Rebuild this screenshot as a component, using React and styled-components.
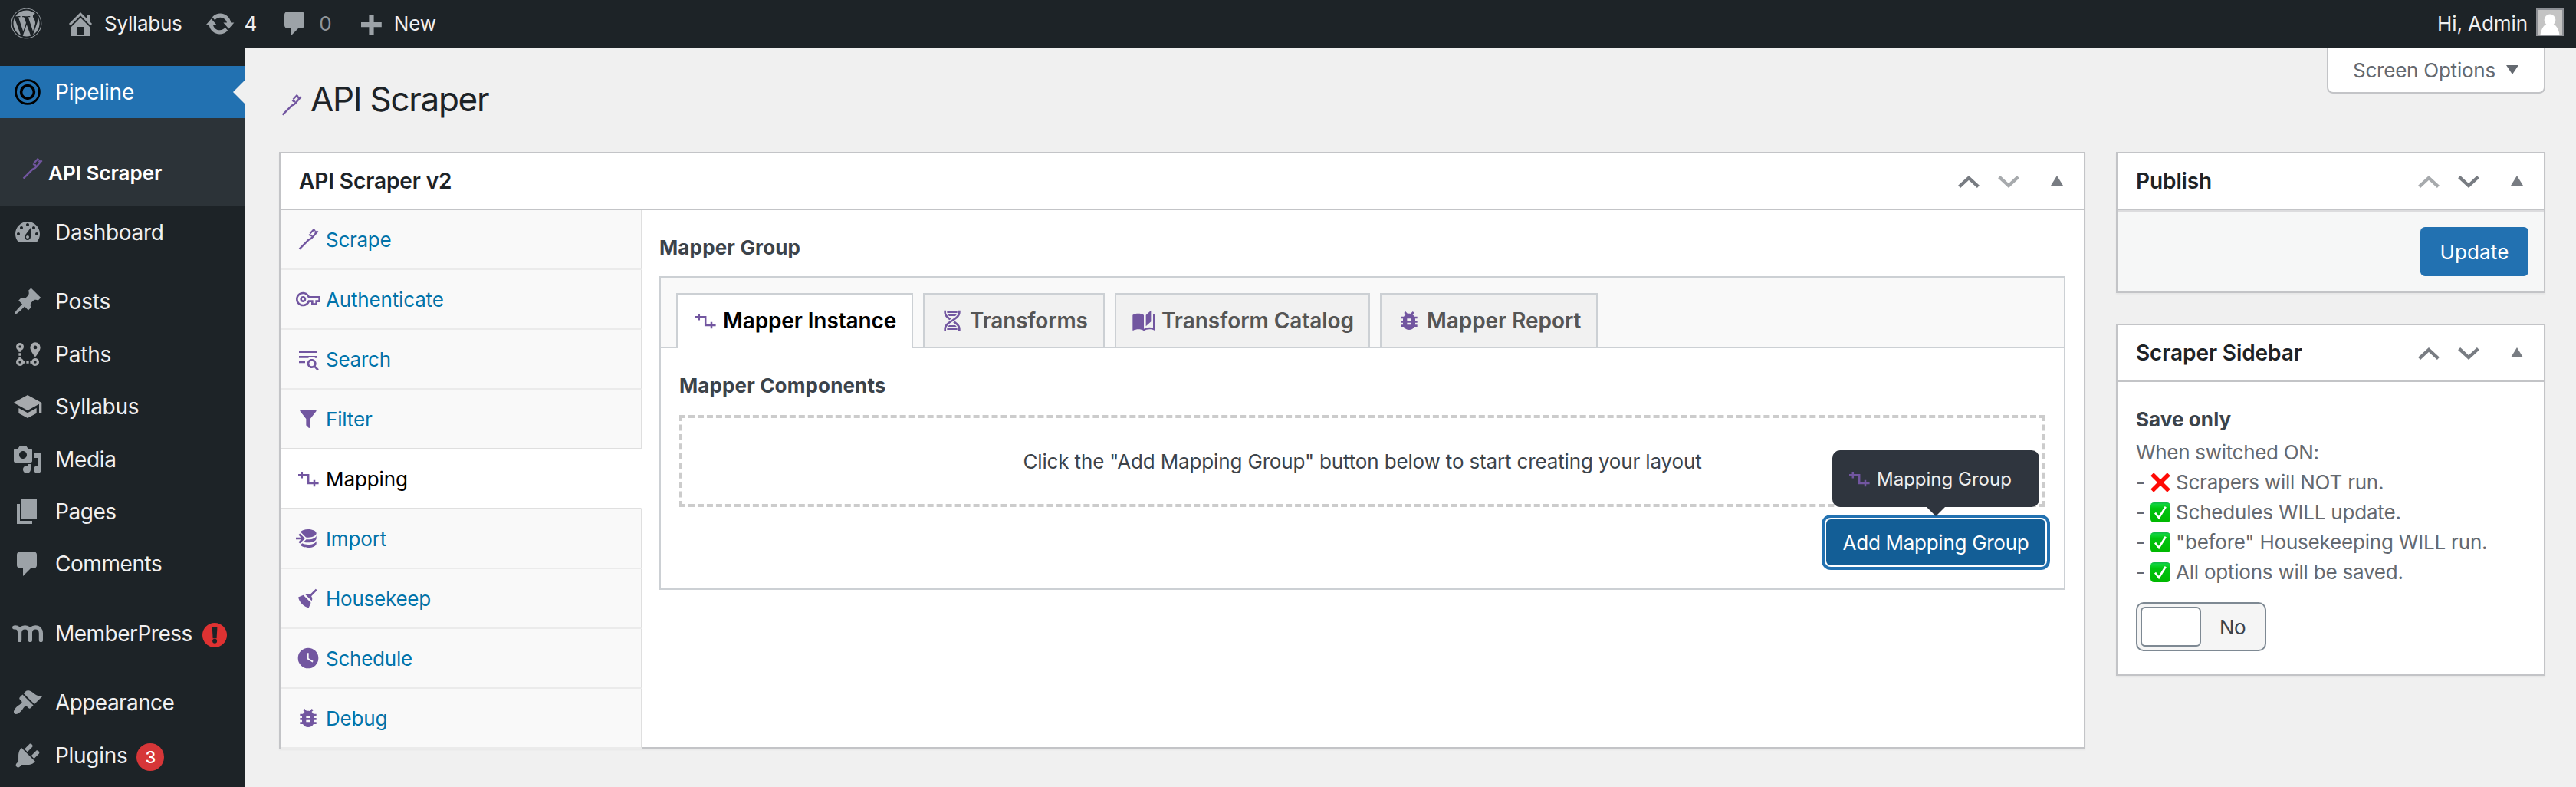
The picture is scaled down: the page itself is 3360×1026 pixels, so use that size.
import React from "react";
import styled, { createGlobalStyle, css } from "styled-components";
import { FaWordpress } from "react-icons/fa";

const GlobalStyle = createGlobalStyle`
  * { box-sizing: border-box; }
  body {
    margin: 0;
    background: #f0f0f0;
    font-family: Inter, "Liberation Sans", sans-serif;
    font-size: 26px;
    color: #3c434a;
    overflow: hidden;
  }
  svg { display: block; flex: none; }
`;

const PURPLE = "#7256a0";

/* ---------- icons ---------- */

const GLYPHS20 = {
  home: "M16 8.5l1.53 1.53-1.06 1.06L10 4.6l-6.47 6.49-1.06-1.06L10 2.5l4 4v-2h2v4zm-6-2.46l6 5.99V18H4v-5.97zM12 17v-5H8v5h4z",
  update: "M10.2 3.28c3.53 0 6.43 2.61 6.92 6h2.08l-3.5 4-3.5-4h2.32c-.45-1.97-2.21-3.45-4.32-3.45-1.45 0-2.73.71-3.54 1.78L4.95 5.66C6.23 4.2 8.11 3.28 10.2 3.28zm-.4 13.44c-3.52 0-6.43-2.61-6.92-6H.8l3.5-4c1.17 1.33 2.33 2.67 3.5 4H5.48c.45 1.97 2.21 3.45 4.32 3.45 1.45 0 2.73-.71 3.54-1.78l1.71 1.95c-1.28 1.46-3.15 2.38-5.25 2.38z",
  comments: "M5 2h9c1.1 0 2 .9 2 2v7c0 1.1-.9 2-2 2h-2l-5 5v-5H5c-1.1 0-2-.9-2-2V4c0-1.1.9-2 2-2z",
  plus: "M17.4 9v3.1h-5.1v5.2H9.2v-5.2H4V9h5.2V4.2h3.1V9z",
  dashboard: "M3.76 16h12.48c1.1-1.37 1.76-3.11 1.76-5 0-4.42-3.58-8-8-8s-8 3.58-8 8c0 1.89.66 3.63 1.76 5zM10 4c.55 0 1 .45 1 1s-.45 1-1 1-1-.45-1-1 .45-1 1-1zM6 6c.55 0 1 .45 1 1s-.45 1-1 1-1-.45-1-1 .45-1 1-1zm8 0c.55 0 1 .45 1 1s-.45 1-1 1-1-.45-1-1 .45-1 1-1zm-5.37 5.55L12 7v6c0 1.1-.9 2-2 2s-2-.9-2-2c0-.57.24-1.08.63-1.45zM4 10c.55 0 1 .45 1 1s-.45 1-1 1-1-.45-1-1 .45-1 1-1zm12 0c.55 0 1 .45 1 1s-.45 1-1 1-1-.45-1-1 .45-1 1-1zm-5 3c0-.55-.45-1-1-1s-1 .45-1 1 .45 1 1 1 1-.45 1-1z",
  posts: "M10.44 3.02l1.82-1.82 6.36 6.35-1.83 1.82c-1.05-.68-2.48-.57-3.41.36l-.75.75c-.92.93-1.04 2.35-.35 3.41l-1.83 1.82-2.41-2.41-2.8 2.79c-.42.42-3.38 2.71-3.8 2.29s1.86-3.39 2.28-3.81l2.79-2.79L4.1 9.36l1.83-1.82c1.05.69 2.48.57 3.4-.36l.75-.75c.93-.92 1.05-2.35.36-3.41z",
  media: "M13 11V4c0-.55-.45-1-1-1h-1.67L9 1H5L3.67 3H2c-.55 0-1 .45-1 1v7c0 .55.45 1 1 1h10c.55 0 1-.45 1-1zM7 4.5c1.38 0 2.5 1.12 2.5 2.5S8.38 9.5 7 9.5 4.5 8.38 4.5 7 5.62 4.5 7 4.5zM14 6h5v10.5c0 1.38-1.12 2.5-2.5 2.5S14 17.88 14 16.5s1.12-2.5 2.5-2.5c.17 0 .34.02.5.05V9h-3V6zm-4 8.05V13h2v3.5c0 1.38-1.12 2.5-2.5 2.5S7 17.88 7 16.5 8.12 14 9.5 14c.17 0 .34.02.5.05z",
  pages: "M6 15V2h10v13H6zm-1 1h8v2H3V5h2v11z",
  appearance: "M14.48 11.06L7.41 3.99l1.5-1.5c.5-.56 2.3-.47 3.51.32 1.21.8 1.43 1.28 2.91 2.1 1.18.64 2.45 1.26 4.45.85zm-.71.71L6.7 4.7 4.93 6.47c-.39.39-.39 1.02 0 1.41l1.06 1.06c.39.39.39 1.03 0 1.42-.6.6-1.43 1.11-2.21 1.69-.35.26-.7.53-1.01.84C1.43 14.23.4 16.08 1.4 17.07c.99 1 2.84-.03 4.18-1.36.31-.31.58-.66.85-1.02.57-.78 1.08-1.61 1.69-2.21.39-.39 1.02-.39 1.41 0l1.06 1.06c.39.39 1.02.39 1.41 0z",
  plugins: "M13.11 4.36L9.87 7.6 8 5.73l3.24-3.24c.35-.34 1.05-.2 1.56.32.52.51.66 1.21.31 1.55zm-8 1.77l.91-1.12 9.01 9.01-1.19.84c-.71.71-2.63 1.16-3.82 1.16H6.14L4.9 17.26c-.59.59-1.54.59-2.12 0-.59-.58-.59-1.53 0-2.12l1.24-1.24v-3.88c0-1.13.4-3.19 1.09-3.89zm7.26 3.97l3.24-3.24c.34-.35 1.04-.21 1.55.31.52.51.66 1.21.31 1.55l-3.24 3.25z",
};

const GLYPHS24 = {
  paths: "M18,15A3,3 0 0,1 21,18A3,3 0 0,1 18,21C16.69,21 15.58,20.17 15.17,19H14V17H15.17C15.58,15.83 16.69,15 18,15M18,17A1,1 0 0,0 17,18A1,1 0 0,0 18,19A1,1 0 0,0 19,18A1,1 0 0,0 18,17M18,8A1.43,1.43 0 0,0 19.43,6.57C19.43,5.78 18.79,5.14 18,5.14C17.21,5.14 16.57,5.78 16.57,6.57A1.43,1.43 0 0,0 18,8M18,2.57A4,4 0 0,1 22,6.57C22,9.56 18,14 18,14C18,14 14,9.56 14,6.57A4,4 0 0,1 18,2.57M8.83,17H10V19H8.83C8.42,20.17 7.31,21 6,21A3,3 0 0,1 3,18C3,16.69 3.83,15.58 5,15.17V14H7V15.17C7.85,15.47 8.53,16.15 8.83,17M6,17A1,1 0 0,0 5,18A1,1 0 0,0 6,19A1,1 0 0,0 7,18A1,1 0 0,0 6,17M6,3A3,3 0 0,1 9,6C9,7.31 8.17,8.42 7,8.83V10H5V8.83C3.83,8.42 3,7.31 3,6A3,3 0 0,1 6,3M6,5A1,1 0 0,0 5,6A1,1 0 0,0 6,7A1,1 0 0,0 7,6A1,1 0 0,0 6,5M11,19V17H13V19H11M7,13H5V11H7V13Z",
  school: "M12,3L1,9L12,15L21,10.09V17H23V9M5,13.18V17.18L12,21L19,17.18V13.18L12,17L5,13.18Z",
  key: "M21 18H15V15H13.3C12.2 17.4 9.7 19 7 19C3.1 19 0 15.9 0 12S3.1 5 7 5C9.7 5 12.2 6.6 13.3 9H24V15H21V18M17 16H19V13H22V11H11.9L11.7 10.3C11 8.3 9.1 7 7 7C4.2 7 2 9.2 2 12S4.2 17 7 17C9.1 17 11 15.7 11.7 13.7L11.9 13H17V16M7 15C5.3 15 4 13.7 4 12S5.3 9 7 9 10 10.3 10 12 8.7 15 7 15M7 11C6.4 11 6 11.4 6 12S6.4 13 7 13 8 12.6 8 12 7.6 11 7 11Z",
  search: "M19.31 18.9L22.39 22L21 23.39L17.88 20.32C17.19 20.75 16.37 21 15.5 21C13 21 11 19 11 16.5C11 14 13 12 15.5 12C18 12 20 14 20 16.5C20 17.38 19.75 18.21 19.31 18.9M15.5 19C16.88 19 18 17.88 18 16.5C18 15.12 16.88 14 15.5 14C14.12 14 13 15.12 13 16.5C13 17.88 14.12 19 15.5 19M21 4V6H3V4H21M3 16V14H9V16H3M3 11V9H21V11H18.97C17.96 10.37 16.77 10 15.5 10C14.23 10 13.04 10.37 12.03 11H3Z",
  filter: "M14,12V19.88C14.04,20.18 13.94,20.5 13.71,20.71C13.32,21.1 12.69,21.1 12.3,20.71L10.29,18.7C10.06,18.47 9.96,18.16 10,17.87V12H9.97L4.21,4.62C3.87,4.19 3.95,3.56 4.38,3.22C4.57,3.08 4.78,3 5,3V3H19V3C19.22,3 19.43,3.08 19.62,3.22C20.05,3.56 20.13,4.19 19.79,4.62L14.03,12H14Z",
  import: "M12,3C8.59,3 5.69,4.07 4.54,5.57L9.79,10.82C10.5,10.93 11.22,11 12,11C16.42,11 20,9.21 20,7C20,4.79 16.42,3 12,3M3.92,7.08L2.5,8.5L5,11H0V13H5L2.5,15.5L3.92,16.92L8.84,12M20,9C20,11.21 16.42,13 12,13C11.34,13 10.7,12.95 10.09,12.87L7.62,15.34C8.88,15.75 10.38,16 12,16C16.42,16 20,14.21 20,12M20,14C20,16.21 16.42,18 12,18C9.72,18 7.67,17.5 6.21,16.75L4.53,18.43C5.68,19.93 8.59,21 12,21C16.42,21 20,19.21 20,17",
  broom: "M19.36,2.72L20.78,4.14L15.06,9.85C16.13,11.39 16.28,13.24 15.38,14.44L9.06,8.12C10.26,7.22 12.11,7.37 13.65,8.44L19.36,2.72M5.93,17.57C3.92,15.56 2.69,13.16 2.35,10.92L7.23,8.83L14.67,16.27L12.58,21.15C10.34,20.81 7.94,19.58 5.93,17.57Z",
  clock: "M12,2A10,10 0 0,0 2,12A10,10 0 0,0 12,22A10,10 0 0,0 22,12A10,10 0 0,0 12,2M16.2,16.2L11,13V7H12.5V12.2L17,14.9L16.2,16.2Z",
  bug: "M14,12H10V10H14M14,16H10V14H14M20,8H17.19C16.74,7.22 16.12,6.55 15.37,6.04L17,4.41L15.59,3L13.42,5.17C12.96,5.06 12.5,5 12,5C11.5,5 11.05,5.06 10.59,5.17L8.41,3L7,4.41L8.62,6.04C7.88,6.55 7.26,7.22 6.81,8H4V10H6.09C6.04,10.33 6,10.66 6,11V12H4V14H6V15C6,15.34 6.04,15.67 6.09,16H4V18H6.81C7.85,19.79 9.78,21 12,21C14.22,21 16.15,19.79 17.19,18H20V16H17.91C17.96,15.67 18,15.34 18,15V14H20V12H18V11C18,10.66 17.96,10.33 17.91,10H20V8Z",
  book: "M19,2L14,6.5V17.5L19,13V2M6.5,5C4.55,5 2.45,5.4 1,6.5V21.16C1,21.41 1.25,21.66 1.5,21.66C1.6,21.66 1.65,21.59 1.75,21.59C3.1,20.94 5.05,20.5 6.5,20.5C8.45,20.5 10.55,20.9 12,22C13.35,21.15 15.8,20.5 17.5,20.5C19.15,20.5 20.85,20.81 22.25,21.56C22.35,21.61 22.4,21.59 22.5,21.59C22.75,21.59 23,21.34 23,21.09V6.5C22.4,6.05 21.75,5.75 21,5.5V19C19.9,18.65 18.7,18.5 17.5,18.5C15.8,18.5 13.35,19.15 12,20V6.5C10.55,5.4 8.45,5 6.5,5Z",
  dna: "M4,2H6V4C6,5.44 6.68,6.61 7.88,7.78C8.74,8.61 9.89,9.41 11.09,10.2L9.26,11.39C8.27,10.72 7.31,10 6.5,9.21C5.07,7.82 4,6.1 4,4V2M18,2H20V4C20,6.1 18.93,7.82 17.5,9.21C16.09,10.58 14.29,11.73 12.54,12.84C10.79,13.96 9.09,15.05 7.88,16.22C6.68,17.39 6,18.56 6,20V22H4V20C4,17.9 5.07,16.18 6.5,14.79C7.91,13.42 9.71,12.27 11.46,11.16C13.21,10.04 14.91,8.95 16.12,7.78C17.32,6.61 18,5.44 18,4V2M14.74,12.61C15.73,13.28 16.69,14 17.5,14.79C18.93,16.18 20,17.9 20,20V22H18V20C18,18.56 17.32,17.39 16.12,16.22C15.26,15.39 14.11,14.59 12.91,13.8L14.74,12.61M7,3H17V4L16.94,4.5H7.06L7,4V3M7.68,6H16.32C16.08,6.34 15.8,6.69 15.42,7.06L14.91,7.5H9.07L8.58,7.06C8.2,6.69 7.92,6.34 7.68,6M9.09,16.5H14.93L15.42,16.94C15.8,17.31 16.08,17.66 16.32,18H7.68C7.92,17.66 8.2,17.31 8.58,16.94L9.09,16.5M7.06,19.5H16.94L17,20V21H7V20L7.06,19.5Z",
};

function Glyph({ name, size }) {
  const small = name in GLYPHS20;
  const side = size || (small ? 40 : 32);
  return (
    <svg width={side} height={side} viewBox={small ? "0 0 20 20" : "0 0 24 24"} fill="currentColor">
      <path d={small ? GLYPHS20[name] : GLYPHS24[name]} />
    </svg>
  );
}

const WandIcon = () => (
  <svg width="32" height="32" viewBox="0 0 32 32" fill="none" stroke="currentColor" strokeWidth="2.4">
    <path d="M4.6 28.6L16.6 16.6C19.2 15.9 20.6 14.8 22 12.8L28.6 5.2" />
    <path d="M17.4 9.4L19.2 11.6M18.4 8.4L23.2 3.4L24.8 5M26.6 5.2L24.6 7.4M19.2 10.4L21 12" strokeWidth="2.2" />
  </svg>
);

const MappingIcon = () => (
  <svg width="32" height="32" viewBox="0 0 32 32" fill="none" stroke="currentColor" strokeWidth="2.5">
    <path d="M3 11.3H16.2V22H29.6M7.8 7V15.6M24 17.8V26.2" />
  </svg>
);

const RingsIcon = () => (
  <svg width="40" height="40" viewBox="0 0 40 40" fill="none" stroke="#000">
    <circle cx="20" cy="20" r="15.4" strokeWidth="2.8" />
    <circle cx="20" cy="20" r="8.4" strokeWidth="3.6" />
  </svg>
);

const MemberIcon = () => (
  <svg width="40" height="40" viewBox="0 0 40 40" fill="none" stroke="currentColor" strokeWidth="5.2" strokeLinecap="round">
    <path d="M2.6 12C7.4 11.4 9.6 14 9.6 19V28.4M9.6 18.6C9.8 14.4 12.6 11.8 16.6 11.8C21 11.8 23.4 14.6 23.4 19V28.4M23.4 18.6C23.6 14.4 26.2 11.8 30.2 11.8C34.8 11.8 37.4 14.8 37.4 19.6V28.4" />
  </svg>
);

const ChevronIcon = ({ down, faded }) => (
  <svg width="28" height="16" viewBox="0 0 28 16" fill="none" stroke={faded ? "#a7aaad" : "#787c82"} strokeWidth="4.4">
    <path d={down ? "M1.6 1.6L14 13L26.4 1.6" : "M1.6 14.4L14 3L26.4 14.4"} />
  </svg>
);

const ToggleTriangle = () => (
  <svg width="16" height="13" viewBox="0 0 16 13" fill="#787c82">
    <path d="M8 0L16 13H0z" />
  </svg>
);

const CrossMark = () => (
  <svg width="26" height="26" viewBox="0 0 26 26" fill="none" stroke="#ff0a05" strokeWidth="5.6">
    <path d="M2.2 2.2L23.8 23.8M23.8 2.2L2.2 23.8" />
  </svg>
);

const CheckMark = () => (
  <svg width="26" height="26" viewBox="0 0 26 26">
    <defs>
      <linearGradient id="checkFill" x1="0" y1="0" x2="0" y2="1">
        <stop offset="0" stopColor="#12b84a" />
        <stop offset=".12" stopColor="#10d838" />
        <stop offset=".3" stopColor="#00c410" />
        <stop offset="1" stopColor="#00b800" />
      </linearGradient>
    </defs>
    <rect width="26" height="26" rx="4.5" fill="url(#checkFill)" />
    <path d="M6 13.6L11 20L19.8 5.8" fill="none" stroke="#fff" strokeWidth="2.6" />
  </svg>
);

/* ---------- admin bar ---------- */

const Page = styled.div`
  height: 1026px;
  display: flex;
  flex-direction: column;
`;

const AdminBar = styled.header`
  height: 62px;
  flex: none;
  display: flex;
  align-items: center;
  gap: 30px;
  padding: 0 16px 1px 14px;
  background: #1d2327;
  color: #9ca2a7;
`;

const BarItem = styled.div`
  display: flex;
  align-items: center;
  gap: 11px;
`;

const BarText = styled.span`
  color: ${(p) => (p.$muted ? "#8f9499" : "#f0f0f1")};
  letter-spacing: ${(p) => p.$track || 0}px;
  white-space: nowrap;
`;

const Account = styled(BarItem)`
  margin-left: auto;
  gap: 11px;
`;

const Avatar = styled.div`
  width: 36px;
  height: 36px;
  margin-top: -4px;
  border: 2px solid #8c8f94;
  background: #c4c4c4;
`;

/* ---------- side menu ---------- */

const Body = styled.div`
  flex: 1;
  display: flex;
  min-height: 0;
`;

const SideMenu = styled.nav`
  width: 320px;
  flex: none;
  padding-top: 24px;
  overflow: hidden;
  background: #1d2327;
`;

const MenuItem = styled.a`
  position: relative;
  height: 68.4px;
  display: flex;
  align-items: center;
  gap: 16px;
  padding-left: 16px;
  margin-top: ${(p) => (p.$spaced ? 22 : 0)}px;
  font-size: 28px;
  color: ${(p) => (p.$custom ? "#a7aaad" : "#9ca2a7")};
  ${(p) =>
    p.$current &&
    css`
      height: 68px;
      background: #2271b1;
      &::after {
        content: "";
        position: absolute;
        right: 0;
        top: 18px;
        border: 16px solid transparent;
        border-left-width: 0;
        border-right-color: #f0f0f0;
      }
    `}
`;

const MenuLabel = styled.span`
  color: ${(p) => (p.$current ? "#fff" : "#f0f0f1")};
  letter-spacing: ${(p) => p.$track}px;
  white-space: nowrap;
`;

const SubMenu = styled.div`
  height: 115px;
  display: flex;
  align-items: center;
  gap: 5px;
  padding: 27px 0 0 26px;
  margin-bottom: -0.2px;
  background: #2c3338;
  color: ${PURPLE};
  svg { margin-bottom: 10px; }
`;

const SubMenuLabel = styled.span`
  font-weight: 600;
  color: #fff;
`;

const CountBadge = styled.span`
  width: 36px;
  height: 36px;
  margin: 5px 0 0 -4px;
  display: grid;
  place-items: center;
  border-radius: 50%;
  background: #d63638;
  color: #fff;
  font-size: 22px;
  font-weight: 500;
`;

const AlertBadge = styled.span`
  width: 32px;
  height: 32px;
  margin: 4px 0 0 -3px;
  border-radius: 50%;
  background: #df3232;
`;

/* ---------- main area ---------- */

const Main = styled.main`
  flex: 1;
  padding: 0 40px 0 44px;
`;

const TitleRow = styled.div`
  height: 136px;
  display: flex;
  justify-content: space-between;
  align-items: flex-start;
`;

const PageTitle = styled.h1`
  margin: 0;
  padding-top: 37px;
  display: flex;
  gap: 9px;
  font-size: 44px;
  font-weight: 400;
  line-height: 60px;
  letter-spacing: -1.3px;
  color: #1d2327;
  svg { margin-top: 22px; color: ${PURPLE}; }
`;

const ScreenOptions = styled.button`
  height: 60px;
  width: 285px;
  display: flex;
  align-items: center;
  gap: 14px;
  padding: 1px 0 0 32px;
  border: 2px solid #c3c4c7;
  border-top: 0;
  border-radius: 0 0 8px 8px;
  background: #fff;
  color: #646970;
  font: inherit;
  letter-spacing: -0.23px;
  white-space: nowrap;
  svg { margin-top: -2px; }
`;

const Columns = styled.div`
  display: flex;
  align-items: flex-start;
  gap: 40px;
`;

const SideColumn = styled.aside`
  width: 560px;
  display: flex;
  flex-direction: column;
  gap: 40px;
`;

const Panel = styled.section`
  flex: ${(p) => (p.$grow ? 1 : "none")};
  border: 2px solid #c3c4c7;
  background: #fff;
  box-shadow: 0 2px 2px rgba(0, 0, 0, 0.04);
`;

const PanelHeader = styled.div`
  height: 74px;
  display: flex;
  align-items: center;
  padding: 0 27px 0 24px;
  border-bottom: 2px solid #c3c4c7;
`;

const PanelTitle = styled.h2`
  margin: 0 auto 0 0;
  font-size: 28px;
  font-weight: 600;
  letter-spacing: -0.1px;
  color: #1d2327;
`;

const OrderControls = styled.div`
  display: flex;
  gap: 24px;
  margin-right: 41px;
  padding-top: 2px;
`;

const ToggleControl = styled.div`
  padding-bottom: 2px;
`;

const PanelBody = styled.div`
  height: 700px;
  display: flex;
  align-items: flex-start;
`;

/* ---------- settings tabs ---------- */

const TabList = styled.nav`
  width: 472px;
  flex: none;
`;

const SettingsTab = styled.a`
  height: 78px;
  display: flex;
  align-items: center;
  gap: 7px;
  padding-left: 20px;
  border-bottom: 2px solid ${(p) => (p.$active || p.$beforeActive ? "#dfdfdf" : "#ebebeb")};
  border-right: 2px solid ${(p) => (p.$active ? "#fff" : "#dfdfdf")};
  background: ${(p) => (p.$active ? "#fff" : "#f9f9f9")};
  color: ${(p) => (p.$active ? "#000" : "#0073aa")};
  letter-spacing: ${(p) => p.$track}px;
  > svg { color: ${PURPLE}; }
`;

const Content = styled.div`
  flex: 1;
  padding: 28px 24px 0 22px;
`;

const FieldLabel = styled.div`
  height: 40px;
  line-height: 42px;
  font-weight: 700;
  letter-spacing: ${(p) => p.$track}px;
  color: #3c434a;
`;

const GroupBox = styled.div`
  height: 409px;
  margin-top: 18px;
  border: 2px solid #ccd0d4;
`;

const GroupTabs = styled.div`
  height: 92px;
  display: flex;
  gap: 13px;
  padding: 20px 20px 0;
  border-bottom: 2px solid #ccd0d4;
  background: #f9f9f9;
`;

const GroupTab = styled.button`
  width: ${(p) => p.$width}px;
  height: ${(p) => (p.$active ? 72 : 70)}px;
  display: flex;
  align-items: center;
  gap: 7px;
  padding: 0 0 ${(p) => (p.$active ? 2 : 0)}px 20px;
  border: 2px solid #ccd0d4;
  border-bottom: 0;
  background: ${(p) => (p.$active ? "#fff" : "#f1f1f1")};
  color: ${(p) => (p.$active ? "#000" : "#555")};
  font: 600 28px Inter, sans-serif;
  letter-spacing: ${(p) => p.$track}px;
  white-space: nowrap;
  > svg { color: ${PURPLE}; }
`;

const GroupBody = styled.div`
  padding: 28px 24px 0;
  display: flex;
  flex-direction: column;
`;

const EmptyLayout = styled.div`
  height: 120px;
  margin: 19px 0 16px;
  display: grid;
  place-items: center;
  border: 4px dashed #ccc;
  letter-spacing: -0.15px;
`;

const AddArea = styled.div`
  position: relative;
  align-self: flex-end;
`;

const PrimaryButton = styled.button`
  display: block;
  width: ${(p) => p.$width}px;
  height: ${(p) => p.$height}px;
  padding: 0;
  border: 0;
  border-radius: 6px;
  background: ${(p) => (p.$focused ? "#135e96" : "#2271b1")};
  box-shadow: ${(p) => (p.$focused ? "0 0 0 2px #fff, 0 0 0 6px #2271b1" : "none")};
  color: #fff;
  font: 400 26px Inter, sans-serif;
  letter-spacing: ${(p) => p.$track}px;
`;

const Tooltip = styled.div`
  position: absolute;
  left: 8px;
  bottom: 76px;
  width: 270px;
  height: 74px;
  display: flex;
  align-items: center;
  gap: 7px;
  padding-left: 19px;
  border-radius: 10px;
  background: #2f353e;
  color: #eee;
  font-size: 24px;
  white-space: nowrap;
  > svg { color: ${PURPLE}; }
  &::after {
    content: "";
    position: absolute;
    left: 123px;
    top: 74px;
    border: 12px solid transparent;
    border-bottom-width: 0;
    border-top-color: #2f353e;
  }
`;

/* ---------- side panels ---------- */

const PublishActions = styled.div`
  height: 106px;
  display: flex;
  justify-content: flex-end;
  padding: 20px 20px 0;
  border-top: 2px solid #dcdcde;
  background: #f6f7f7;
`;

const SaveSettings = styled.div`
  padding: 28px 24px 30px;
`;

const Description = styled.div`
  margin: 4px 0 20px;
  color: #646970;
  line-height: 39px;
`;

const DescriptionLine = styled.div`
  display: flex;
  align-items: center;
  letter-spacing: ${(p) => p.$track}px;
  white-space: nowrap;
  > svg { margin-right: 7px; }
`;

const Dash = styled.span`
  width: 19px;
`;

const Switch = styled.div`
  width: 170px;
  height: 64px;
  display: flex;
  align-items: center;
  padding: 4px;
  border: 2px solid #7e8993;
  border-radius: 10px;
  background: #f5f5f5;
`;

const SwitchKnob = styled.div`
  width: 79px;
  height: 52px;
  border: 2px solid #7e8993;
  border-radius: 6px;
  background: #fff;
`;

const SwitchText = styled.span`
  margin-left: 24px;
  letter-spacing: -0.5px;
`;

/* ---------- data ---------- */

const MENU = [
  { label: "Dashboard", icon: "dashboard", track: -0.32 },
  { label: "Posts", icon: "posts", track: -0.17, spaced: true },
  { label: "Paths", icon: "paths", track: -0.2, custom: true },
  { label: "Syllabus", icon: "school", track: -0.3, custom: true },
  { label: "Media", icon: "media", track: -0.35 },
  { label: "Pages", icon: "pages", track: -0.45 },
  { label: "Comments", icon: "comments", track: -0.44 },
  { label: "MemberPress", icon: "member", track: -0.52, spaced: true, alert: true },
  { label: "Appearance", icon: "appearance", track: -0.58, spaced: true },
  { label: "Plugins", icon: "plugins", track: -0.3, count: 3 },
];

const SETTINGS = [
  { label: "Scrape", icon: "wand", track: -0.27 },
  { label: "Authenticate", icon: "key", track: -0.16 },
  { label: "Search", icon: "search", track: -0.25 },
  { label: "Filter", icon: "filter", track: -0.15, beforeActive: true },
  { label: "Mapping", icon: "mapping", track: -0.1, active: true },
  { label: "Import", icon: "import", track: -0.15 },
  { label: "Housekeep", icon: "broom", track: -0.24 },
  { label: "Schedule", icon: "clock", track: -0.24 },
  { label: "Debug", icon: "bug", track: -0.2 },
];

const GROUP_TABS = [
  { label: "Mapper Instance", icon: "mapping", track: -0.12, width: 309, active: true },
  { label: "Transforms", icon: "dna", track: -0.2, width: 237 },
  { label: "Transform Catalog", icon: "book", track: -0.06, width: 333 },
  { label: "Mapper Report", icon: "bug", track: -0.06, width: 284 },
];

const NOTES = [
  { text: "Scrapers will NOT run.", track: -0.22, cross: true },
  { text: "Schedules WILL update.", track: -0.19 },
  { text: '"before" Housekeeping WILL run.', track: -0.2 },
  { text: "All options will be saved.", track: -0.23 },
];

function Icon({ name }) {
  if (name === "wand") return <WandIcon />;
  if (name === "mapping") return <MappingIcon />;
  if (name === "member") return <MemberIcon />;
  if (name === "paths" || name === "school") return <Glyph name={name} size={40} />;
  return <Glyph name={name} />;
}

function PanelHead({ title, upFaded, downFaded }) {
  return (
    <PanelHeader>
      <PanelTitle>{title}</PanelTitle>
      <OrderControls>
        <ChevronIcon faded={upFaded} />
        <ChevronIcon down faded={downFaded} />
      </OrderControls>
      <ToggleControl>
        <ToggleTriangle />
      </ToggleControl>
    </PanelHeader>
  );
}

export default function App() {
  return (
    <Page>
      <GlobalStyle />
      <AdminBar>
        <FaWordpress size={41} />
        <BarItem>
          <Glyph name="home" />
          <BarText $track={-0.27}>Syllabus</BarText>
        </BarItem>
        <BarItem>
          <Glyph name="update" />
          <BarText>4</BarText>
        </BarItem>
        <BarItem>
          <Glyph name="comments" />
          <BarText $muted>0</BarText>
        </BarItem>
        <BarItem>
          <Glyph name="plus" />
          <BarText $track={-0.14}>New</BarText>
        </BarItem>
        <Account>
          <BarText $track={-0.08}>Hi, Admin</BarText>
          <Avatar>
            <svg width="32" height="32" viewBox="0 0 32 32" fill="#fff">
              <ellipse cx="16" cy="13" rx="7.4" ry="7.6" />
              <path d="M3.6 32C4.6 24 8.6 19 12.6 18.2H19.4C23.4 19 27.4 24 28.4 32z" />
            </svg>
          </Avatar>
        </Account>
      </AdminBar>

      <Body>
        <SideMenu>
          <MenuItem $current>
            <RingsIcon />
            <MenuLabel $current $track={-0.18}>Pipeline</MenuLabel>
          </MenuItem>
          <SubMenu>
            <WandIcon />
            <SubMenuLabel>API Scraper</SubMenuLabel>
          </SubMenu>
          {MENU.map((m) => (
            <MenuItem key={m.label} $spaced={m.spaced} $custom={m.custom}>
              <Icon name={m.icon} />
              <MenuLabel $track={m.track}>{m.label}</MenuLabel>
              {m.alert && (
                <AlertBadge>
                  <svg width="32" height="32" viewBox="0 0 32 32" fill="#1d2327">
                    <path d="M12.8 6H19.4L18.6 20.2H13.6z" />
                    <circle cx="16.1" cy="23.8" r="3" />
                  </svg>
                </AlertBadge>
              )}
              {m.count && <CountBadge>{m.count}</CountBadge>}
            </MenuItem>
          ))}
        </SideMenu>

        <Main>
          <TitleRow>
            <PageTitle>
              <WandIcon />
              API Scraper
            </PageTitle>
            <ScreenOptions>
              Screen Options
              <svg width="16" height="12" viewBox="0 0 16 12" fill="#646970">
                <path d="M0 0H16L8 12z" />
              </svg>
            </ScreenOptions>
          </TitleRow>

          <Columns>
            <Panel $grow>
              <PanelHead title="API Scraper v2" downFaded />
              <PanelBody>
                <TabList>
                  {SETTINGS.map((t) => (
                    <SettingsTab key={t.label} $active={t.active} $beforeActive={t.beforeActive} $track={t.track}>
                      <Icon name={t.icon} />
                      {t.label}
                    </SettingsTab>
                  ))}
                </TabList>
                <Content>
                  <FieldLabel $track={0.15}>Mapper Group</FieldLabel>
                  <GroupBox>
                    <GroupTabs>
                      {GROUP_TABS.map((t) => (
                        <GroupTab key={t.label} $active={t.active} $width={t.width} $track={t.track}>
                          <Icon name={t.icon} />
                          {t.label}
                        </GroupTab>
                      ))}
                    </GroupTabs>
                    <GroupBody>
                      <FieldLabel $track={0.13}>Mapper Components</FieldLabel>
                      <EmptyLayout>
                        Click the "Add Mapping Group" button below to start creating your layout
                      </EmptyLayout>
                      <AddArea>
                        <PrimaryButton $focused $width={286} $height={60} $track={-0.28}>
                          Add Mapping Group
                        </PrimaryButton>
                        <Tooltip>
                          <MappingIcon />
                          Mapping Group
                        </Tooltip>
                      </AddArea>
                    </GroupBody>
                  </GroupBox>
                </Content>
              </PanelBody>
            </Panel>

            <SideColumn>
              <Panel>
                <PanelHead title="Publish" upFaded />
                <PublishActions>
                  <PrimaryButton $width={141} $height={64} $track={0.15}>
                    Update
                  </PrimaryButton>
                </PublishActions>
              </Panel>
              <Panel>
                <PanelHead title="Scraper Sidebar" />
                <SaveSettings>
                  <FieldLabel $track={0.08}>Save only</FieldLabel>
                  <Description>
                    <DescriptionLine $track={-0.31}>When switched ON:</DescriptionLine>
                    {NOTES.map((n) => (
                      <DescriptionLine key={n.text} $track={n.track}>
                        <Dash>-</Dash>
                        {n.cross ? <CrossMark /> : <CheckMark />}
                        {n.text}
                      </DescriptionLine>
                    ))}
                  </Description>
                  <Switch>
                    <SwitchKnob />
                    <SwitchText>No</SwitchText>
                  </Switch>
                </SaveSettings>
              </Panel>
            </SideColumn>
          </Columns>
        </Main>
      </Body>
    </Page>
  );
}
